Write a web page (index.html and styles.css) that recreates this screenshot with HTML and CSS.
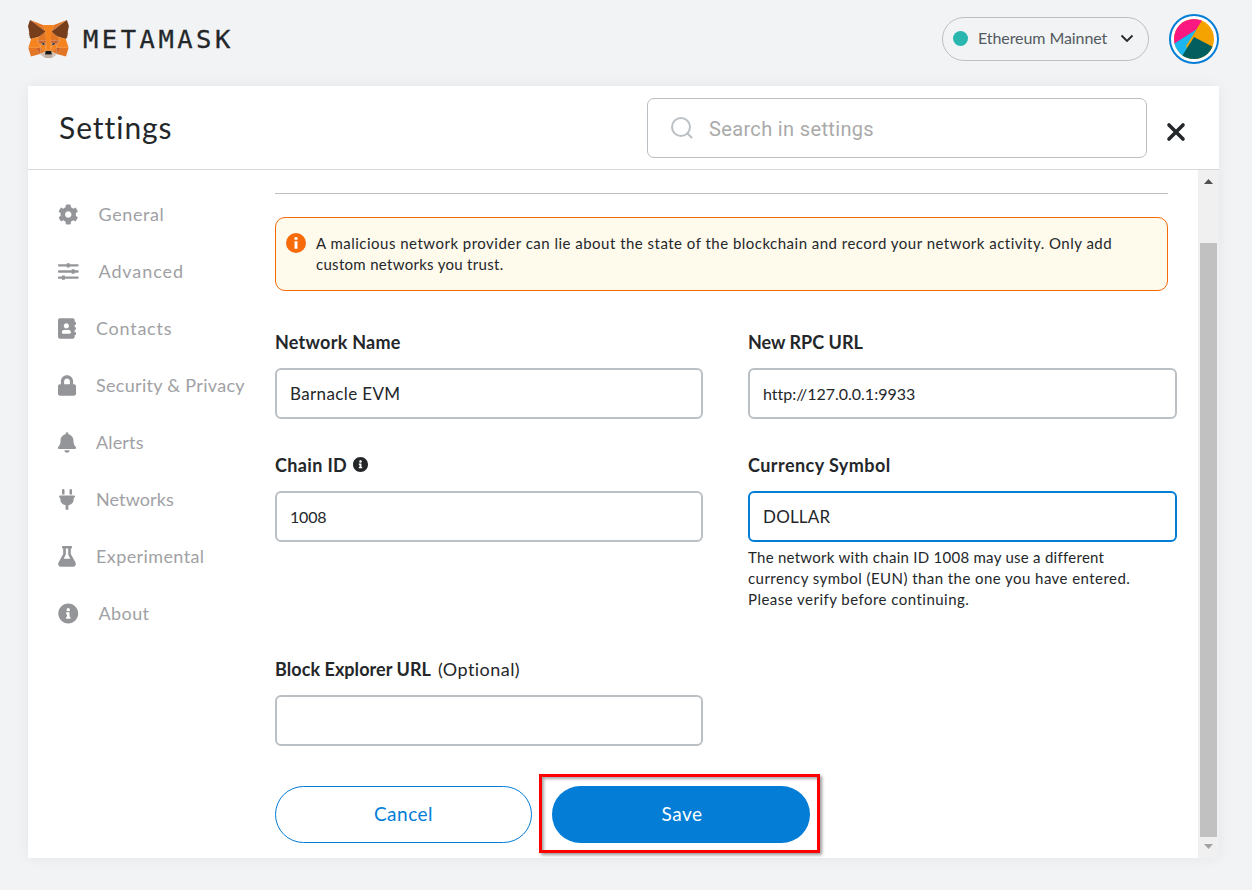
FILE: index.html
```html
<!DOCTYPE html>
<html lang="en">
<head>
<meta charset="utf-8">
<title>MetaMask</title>
<link rel="stylesheet" href="styles.css">
</head>
<body>
<header class="app-header">
  <div class="brand">
    <svg class="fox" viewBox="1 1 33.7 31.1" preserveAspectRatio="none">
      <path fill="#E17726" d="m32.9582 1-13.1341 9.7183 2.4424-5.7273z"/>
      <path fill="#E27625" d="m2.663 1 13.0171 9.809-2.3254-5.818zM28.2295 23.5335l-3.4947 5.3386 7.4829 2.0603 2.1436-7.2823zM1.2728 23.6501l2.1306 7.2823 7.4699-2.0603-3.4817-5.3386zM10.4706 14.5149l-2.0786 3.1358 7.405.3369-.2469-7.969zM25.1505 14.5149l-5.1575-4.587-.1688 8.0597 7.4049-.3369zM10.8733 28.8721l4.4819-2.1639-3.8583-3.0062zM20.2659 26.7082l4.4689 2.1639-.6105-5.1701z"/>
      <path fill="#D5BFB2" d="m24.7348 28.8721-4.469-2.1639.3638 2.9025-.039 1.231zM10.8732 28.8721l4.1572 1.9696-.026-1.231.3508-2.9025z"/>
      <path fill="#233447" d="m15.1084 21.7842-3.7155-1.0884 2.6243-1.2051zM20.5126 21.7842l1.0913-2.2935 2.6372 1.2051z"/>
      <path fill="#CC6228" d="m10.8733 28.8721.6495-5.3386-4.1312.1167zM24.0982 23.5335l.6366 5.3386 3.4946-5.2219zM27.2291 17.6507l-7.405.3369.6885 3.7966 1.0913-2.2935 2.6372 1.2051zM11.3929 20.6958l2.6242-1.2051 1.0913 2.2935.6885-3.7966-7.405-.3369z"/>
      <path fill="#E27525" d="m8.392 17.6507 3.1049 6.0513-.1039-3.0062zM24.2412 20.6958l-.1169 3.0062 3.1049-6.0513zM15.797 17.9876l-.6886 3.7967.8704 4.4833.1949-5.9087zM19.8242 17.9876l-.3638 2.3584.1819 5.9216.8704-4.4833z"/>
      <path fill="#F5841F" d="m20.5127 21.7842-.8704 4.4834.6236.4406 3.8584-3.0062.1169-3.0062zM11.3929 20.6958l.104 3.0062 3.8583 3.0062.6236-.4406-.8704-4.4834z"/>
      <path fill="#C0AC9D" d="m20.5906 30.8417.039-1.231-.3378-.2851h-4.9626l-.3248.2851.026 1.231-4.1572-1.9696 1.4551 1.1921 2.9489 2.0344h5.0536l2.962-2.0344 1.442-1.1921z"/>
      <path fill="#161616" d="m20.2659 26.7082-.6236-.4406h-3.6635l-.6236.4406-.3508 2.9025.3248-.2851h4.9626l.3378.2851z"/>
      <path fill="#763E1A" d="m33.5168 11.3532 1.1043-5.3645-1.6629-4.9887-12.6923 9.3944 4.8846 4.1205 6.8983 2.0085 1.52-1.7752-.6626-.4795 1.0523-.9588-.8054-.622 1.0523-.8034zM1 5.9887l1.1043 5.3645-.7145.5313 1.0653.8034-.8054.622 1.0523.9588-.6625.4795 1.52 1.7752 6.8984-2.0085 4.8846-4.1205L2.663 1z"/>
      <path fill="#F5841F" d="m32.0489 16.5234-6.8983-2.0085 2.0786 3.1358-3.1049 6.0513 4.1052-.0519h6.1318zM10.4705 14.5149l-6.8983 2.0085-2.2994 7.1267h6.1188l4.1052.0519-3.105-6.0513zM19.8241 17.9876l.4417-7.5932 2.0007-5.4034h-8.9119l2.0006 5.4034.4417 7.5932.1689 2.3842.013 5.8958h3.6635l.013-5.8958z"/>
    </svg>
    <span class="wordmark">METAMASK</span>
  </div>
  <div class="account">
    <div class="network">
      <i class="network-dot"></i>
      <span class="network-name">Ethereum Mainnet</span>
      <svg class="chevron" viewBox="0 0 14 9"><path d="M1.500 1.500 7 7l5.500-5.500"/></svg>
    </div>
    <svg class="avatar" viewBox="0 0 50 50">
      <defs><clipPath id="disc"><circle cx="25" cy="25" r="20"/></clipPath></defs>
      <circle cx="25" cy="25" r="24" fill="#fff" stroke="#037dd6" stroke-width="2"/>
      <g clip-path="url(#disc)">
        <path fill="#f5a300" d="M0 0h50v50H0z"/>
        <path fill="#fb1880" d="M0 0h37L27 16 5 31H0z"/>
        <path fill="#1bb6f0" d="M0 33 28 15 17 36v14H0z"/>
        <path fill="#f5a300" d="m17 32 11-17 2 5-6 5-6 9z"/>
        <path fill="#035e60" d="m25 23 25 13v14H8z"/>
      </g>
    </svg>
  </div>
</header>

<main class="card">
  <div class="card-header">
    <h1 class="title">Settings</h1>
    <div class="search">
      <svg class="search-icon" viewBox="0 0 24 24"><circle cx="11" cy="11" r="9"/><path d="m17.500 17.500 4 4"/></svg>
      <span class="search-text">Search in settings</span>
    </div>
    <svg class="close" viewBox="0 0 20 20"><path d="m3 3 14 14M17 3 3 17"/></svg>
  </div>

  <div class="card-body">
    <nav class="nav">
      <a class="nav-item wide"><svg viewBox="0 0 512 512"><path d="M487.400 315.700l-42.600-24.600c4.300-23.200 4.300-47 0-70.200l42.600-24.600c4.900-2.800 7.100-8.600 5.500-14-11.100-35.600-30-67.800-54.700-94.600-3.800-4.100-10-5.100-14.800-2.300L380.800 110c-17.900-15.400-38.500-27.300-60.800-35.100V25.800c0-5.600-3.900-10.500-9.400-11.700-36.700-8.200-74.300-7.800-109.200 0-5.500 1.200-9.400 6.100-9.400 11.700V75c-22.200 7.900-42.800 19.800-60.800 35.100L88.700 85.500c-4.900-2.800-11-1.900-14.800 2.300-24.700 26.700-43.600 58.900-54.700 94.600-1.700 5.400.6 11.200 5.500 14L67.300 221c-4.300 23.200-4.300 47 0 70.200l-42.600 24.600c-4.900 2.800-7.100 8.600-5.500 14 11.100 35.600 30 67.800 54.700 94.600 3.800 4.100 10 5.100 14.800 2.300l42.600-24.600c17.900 15.400 38.500 27.300 60.800 35.100v49.200c0 5.600 3.900 10.500 9.400 11.700 36.700 8.200 74.300 7.800 109.200 0 5.500-1.200 9.400-6.100 9.400-11.700v-49.200c22.200-7.900 42.800-19.800 60.800-35.100l42.600 24.600c4.900 2.800 11 1.900 14.800-2.300 24.700-26.700 43.600-58.900 54.700-94.600 1.500-5.500-.7-11.300-5.600-14.100zM256 336c-44.100 0-80-35.900-80-80s35.900-80 80-80 80 35.900 80 80-35.900 80-80 80z"/></svg><span class="t-general">General</span></a>
      <a class="nav-item wide"><svg viewBox="0 0 21 21"><path d="M1 3h8V2h3v1h8a1 1 0 0 1 0 2.400h-8v1.100H9V5.400H1A1 1 0 0 1 1 3zM1 9.300h13V8.300h3v1h3a1 1 0 0 1 0 2.400h-3v1h-3v-1H1a1 1 0 0 1 0-2.400zM1 15.600h3v-1.100h3v1.100h13a1 1 0 0 1 0 2.400H7v1H4v-1H1a1 1 0 0 1 0-2.400z"/></svg><span class="t-advanced">Advanced</span></a>
      <a class="nav-item"><svg viewBox="0 0 448 512"><path d="M436 160c6.600 0 12-5.400 12-12v-40c0-6.600-5.400-12-12-12h-20V48c0-26.500-21.500-48-48-48H48C21.500 0 0 21.500 0 48v416c0 26.500 21.500 48 48 48h320c26.500 0 48-21.500 48-48v-48h20c6.600 0 12-5.400 12-12v-40c0-6.600-5.400-12-12-12h-20v-64h20c6.600 0 12-5.400 12-12v-40c0-6.600-5.400-12-12-12h-20v-64h20zm-228-32c35.300 0 64 28.700 64 64s-28.700 64-64 64-64-28.700-64-64 28.700-64 64-64zm112 236.800c0 10.600-10 19.200-22.400 19.200H118.400C106 384 96 375.400 96 364.800v-19.200c0-31.800 30.100-57.600 67.200-57.600h5c12.300 5.100 25.700 8 39.800 8s27.600-2.900 39.800-8h5c37.100 0 67.200 25.800 67.200 57.600v19.200z"/></svg><span class="t-contacts">Contacts</span></a>
      <a class="nav-item"><svg viewBox="0 0 448 512"><path d="M400 224h-24v-72C376 68.200 307.800 0 224 0S72 68.200 72 152v72H48c-26.500 0-48 21.500-48 48v192c0 26.500 21.500 48 48 48h352c26.500 0 48-21.500 48-48V272c0-26.500-21.500-48-48-48zm-104 0H152v-72c0-39.700 32.300-72 72-72s72 32.300 72 72v72z"/></svg><span class="t-security">Security &amp; Privacy</span></a>
      <a class="nav-item"><svg viewBox="0 0 448 512"><path d="M224 512c35.320 0 63.970-28.650 63.970-64H160.030c0 35.350 28.650 64 63.970 64zm215.390-149.710c-19.320-20.760-55.470-51.990-55.470-154.290 0-77.700-54.480-139.900-127.940-155.160V32c0-17.670-14.320-32-31.980-32s-31.980 14.330-31.980 32v20.840C118.560 68.100 64.080 130.300 64.080 208c0 102.300-36.150 133.530-55.470 154.290-6 6.450-8.660 14.160-8.610 21.710.11 16.400 12.980 32 32.100 32h383.800c19.120 0 32-15.600 32.100-32 .05-7.550-2.610-15.270-8.610-21.710z"/></svg><span class="t-alerts">Alerts</span></a>
      <a class="nav-item"><svg viewBox="0 0 18 21"><path d="M4 1.200a1.200 1.200 0 0 1 2.500 0V5.500H4zM11.500 1.200a1.200 1.200 0 0 1 2.500 0V5.500h-2.500zM1.700 6.600h14.600a.6.6 0 0 1 .6.600v.9a.6.600 0 0 1-.6.600h-.6v1.500a6.500 6.500 0 0 1-5.300 6v4.500H7.600v-4.500a6.500 6.500 0 0 1-5.300-6V8.700h-.6a.6.600 0 0 1-.6-.6v-.9a.6.600 0 0 1 .6-.6z"/></svg><span class="t-networks">Networks</span></a>
      <a class="nav-item"><svg viewBox="0 0 18 21"><path fill-rule="evenodd" d="M4.800 0h8.400c.5 0 .8.300.8.800v1c0 .5-.3.800-.8.800h-.4v5.300l4.700 8.700c1 2-.3 4.100-2.400 4.100H2.900C.8 20.700-.5 18.600.5 16.600l4.700-8.700V2.600h-.4c-.5 0-.8-.3-.8-.8v-1c0-.5.3-.8.800-.8zM7.800 2.600v6L5.700 12.800h6.600L10.200 8.600v-6z"/></svg><span class="t-experimental">Experimental</span></a>
      <a class="nav-item wide"><svg viewBox="0 0 512 512"><path d="M256 8C119.043 8 8 119.083 8 256c0 136.997 111.043 248 248 248s248-111.003 248-248C504 119.083 392.957 8 256 8zm0 110c23.196 0 42 18.804 42 42s-18.804 42-42 42-42-18.804-42-42 18.804-42 42-42zm56 254c0 6.627-5.373 12-12 12h-88c-6.627 0-12-5.373-12-12v-24c0-6.627 5.373-12 12-12h12v-64h-12c-6.627 0-12-5.373-12-12v-24c0-6.627 5.373-12 12-12h64c6.627 0 12 5.373 12 12v100h12c6.627 0 12 5.373 12 12v24z"/></svg><span class="t-about">About</span></a>
    </nav>

    <section class="content">
      <div class="divider"></div>
      <div class="alert">
        <svg class="alert-icon" viewBox="0 0 20 20"><circle cx="10" cy="10" r="10" fill="#f66a0a"/><path fill="#fff" d="M8.500 4.200h3v2.600h-3zM8.500 8.200h3v7.600h-3z"/></svg>
        <p class="alert-text"><span class="t-alert1">A malicious network provider can lie about the state of the blockchain and record your network activity. Only add</span><br><span class="t-alert2">custom networks you trust.</span></p>
      </div>
      <div class="form">
        <div class="field">
          <div class="label t-name">Network Name</div>
          <div class="input t-barnacle">Barnacle EVM</div>
        </div>
        <div class="field">
          <div class="label t-rpc">New RPC URL</div>
          <div class="input t-url">http://127.0.0.1:9933</div>
        </div>
        <div class="field">
          <div class="label"><span class="t-chain">Chain ID</span><svg class="info" viewBox="8 8 496 496"><path d="M256 8C119.043 8 8 119.083 8 256c0 136.997 111.043 248 248 248s248-111.003 248-248C504 119.083 392.957 8 256 8zm0 110c23.196 0 42 18.804 42 42s-18.804 42-42 42-42-18.804-42-42 18.804-42 42-42zm56 254c0 6.627-5.373 12-12 12h-88c-6.627 0-12-5.373-12-12v-24c0-6.627 5.373-12 12-12h12v-64h-12c-6.627 0-12-5.373-12-12v-24c0-6.627 5.373-12 12-12h64c6.627 0 12 5.373 12 12v100h12c6.627 0 12 5.373 12 12v24z"/></svg></div>
          <div class="input t-1008">1008</div>
        </div>
        <div class="field">
          <div class="label t-currency">Currency Symbol</div>
          <div class="input focused t-dollar">DOLLAR</div>
          <p class="hint"><span class="t-hint1">The network with chain ID 1008 may use a different</span><br><span class="t-hint2">currency symbol (EUN) than the one you have entered.</span><br><span class="t-hint3">Please verify before continuing.</span></p>
        </div>
        <div class="field">
          <div class="label"><span class="t-block">Block Explorer URL</span><span class="optional">(Optional)</span></div>
          <div class="input"></div>
        </div>
      </div>
      <div class="actions">
        <div class="btn cancel">Cancel</div>
        <div class="highlight"><div class="btn save">Save</div></div>
      </div>
    </section>

    <div class="scrollbar">
      <svg class="arrow up" viewBox="0 0 9 5"><path d="M4.500 0 9 5H0z"/></svg>
      <div class="thumb"></div>
      <svg class="arrow down" viewBox="0 0 9 5"><path d="M0 0h9L4.500 5z"/></svg>
    </div>
  </div>
</main>
</body>
</html>
```
FILE: styles.css
```css
* { box-sizing: border-box; }

body {
  margin: 0;
  width: 1252px;
  height: 890px;
  overflow: hidden;
  background: #f2f3f4;
  color: #24272a;
  font-family: Lato, "Open Sans", sans-serif;
  font-size: 16px;
  font-variant-ligatures: none;
}

h1, p { margin: 0; font-weight: 400; }
svg { display: block; flex: none; }
span, .btn { white-space: nowrap; }

.app-header {
  display: flex;
  justify-content: space-between;
  align-items: flex-start;
  height: 86px;
  padding: 14px 33px 0 28px;
}

.brand { display: flex; align-items: center; gap: 14px; padding-top: 5px; }
.fox { width: 41px; height: 38px; }
.wordmark {
  font-family: "DejaVu Sans Mono", monospace;
  font-size: 25.500px;
  line-height: 40px;
  letter-spacing: 3.500px;
  -webkit-text-stroke: 0.300px #24272a;
}

.account { display: flex; align-items: center; gap: 20px; }
.network {
  display: flex;
  align-items: center;
  width: 207px;
  height: 44px;
  margin-bottom: 1px;
  padding: 0 14px 0 10px;
  border: 1px solid #bbc0c5;
  border-radius: 22px;
  color: #535a61;
}
.network-dot { width: 15px; height: 15px; border-radius: 50%; background: #29b6af; }
.network-name { width: 129px; margin: 0 13px 2px 10px; letter-spacing: -0.080px; }
.chevron { width: 14px; height: 9px; fill: none; stroke: #24272a; stroke-width: 1.800; }
.avatar { width: 50px; height: 50px; }

.card {
  width: 1191px;
  height: 772px;
  margin-left: 28px;
  background: #fff;
  box-shadow: 0 0 14px rgba(0, 0, 0, 0.06);
}

.card-header {
  display: flex;
  align-items: center;
  height: 84px;
  padding: 0 33px 0 31px;
  border-bottom: 1px solid #d6d9dc;
}
.title { width: 588px; margin-bottom: 2px; font-size: 30px; line-height: 40px; letter-spacing: 0.950px; }
.search {
  display: flex;
  align-items: center;
  width: 500px;
  height: 60px;
  padding-left: 22px;
  border: 1px solid #bbc0c5;
  border-radius: 7px;
}
.search-icon { width: 24px; height: 24px; margin-top: 1px; fill: none; stroke: #bbc0c5; stroke-width: 2; stroke-linecap: round; }
.search-text { margin: 2px 0 0 15px; font-family: Roboto, sans-serif; font-size: 20px; letter-spacing: 0.350px; color: #aaa; }
.close { width: 20px; height: 20px; margin: 8px 0 0 19px; fill: none; stroke: #24272a; stroke-width: 3.600; stroke-linecap: round; }

.card-body { display: flex; height: 688px; }

.nav { width: 247px; padding: 16px 0 0 30px; }
.nav-item {
  display: flex;
  align-items: center;
  gap: 20px;
  height: 57px;
  font-size: 18px;
  color: #9fa1a4;
}
.nav-item span { margin-bottom: 2px; }
.nav-item svg { width: 18px; height: 21px; fill: #939598; }
.nav-item.wide svg { width: 20.500px; height: 21px; }

.t-general { letter-spacing: 0.600px; }
.t-advanced { letter-spacing: 0.900px; }
.t-contacts { letter-spacing: 0.750px; }
.t-security { letter-spacing: 0.300px; }
.t-alerts { letter-spacing: 0.150px; }
.t-networks { letter-spacing: 0.100px; }
.t-experimental { letter-spacing: 0.400px; }
.t-about { letter-spacing: 0.400px; }

.content { width: 923px; padding-top: 23px; }
.divider { width: 893px; height: 1px; background: #bbc0c5; }
.alert {
  display: flex;
  gap: 10px;
  width: 893px;
  height: 74px;
  margin-top: 23px;
  padding: 15px 10px;
  border: 1px solid #f66a0a;
  border-radius: 10px;
  background: #fefaec;
}
.alert-icon { width: 20px; height: 20px; }
.alert-text { font-size: 15px; line-height: 21px; }
.t-alert1 { letter-spacing: 0.485px; }
.t-alert2 { letter-spacing: 0.300px; }

.form {
  display: grid;
  grid-template-columns: 428px 429px;
  grid-template-rows: 123px 204px 76px;
  column-gap: 45px;
  padding-top: 40px;
}
.label { display: flex; align-items: center; height: 22px; font-size: 18px; font-weight: 700; }
.input {
  display: flex;
  align-items: center;
  height: 51px;
  margin-top: 15px;
  padding: 0 13px 1px;
  border: 2px solid #bbc0c5;
  border-radius: 6px;
  font-size: 17px;
}
.input.focused { border-color: #037dd6; }
.info { width: 15px; height: 15px; margin: 0 0 1px 6px; fill: #24272a; }
.optional { margin-left: 7px; font-weight: 400; letter-spacing: 0.450px; }
.hint { padding-top: 5px; font-size: 15px; line-height: 21px; }

.t-name { letter-spacing: 0.250px; }
.t-chain { letter-spacing: 0.350px; }
.t-currency { letter-spacing: 0.450px; }
.t-block { letter-spacing: 0.050px; }
.t-barnacle { letter-spacing: 0.370px; }
.t-url { font-size: 16px; }
.t-1008 { font-size: 16px; letter-spacing: -0.200px; }
.t-dollar { letter-spacing: 0.200px; }
.t-hint1 { letter-spacing: 0.270px; }
.t-hint2 { letter-spacing: 0.440px; }
.t-hint3 { letter-spacing: 0.470px; }

.actions { display: flex; gap: 7px; margin-top: 40px; }
.btn {
  display: flex;
  align-items: center;
  justify-content: center;
  height: 57px;
  padding-bottom: 2px;
  border-radius: 29px;
  font-size: 19px;
  letter-spacing: 0.500px;
}
.cancel { width: 257px; margin-top: 12px; border: 1px solid #037dd6; color: #037dd6; }
.highlight {
  width: 281px;
  height: 79px;
  padding: 9px 7px 0 10px;
  border: 3px solid #f00;
  box-shadow: 2px 2px 3px rgba(0, 0, 0, 0.400), inset 2px 2px 3px rgba(0, 0, 0, 0.350);
}
.save { padding-left: 2px; background: #037dd6; color: #fff; }

.scrollbar {
  display: flex;
  flex-direction: column;
  align-items: center;
  width: 21px;
  background: #f0f0f0;
}
.thumb { width: 17px; height: 594px; margin-top: 59px; background: #c1c1c1; }
.arrow { width: 9px; height: 5px; }
.up { margin-top: 9px; fill: #505050; }
.down { margin-top: 7px; fill: #a3a3a3; }
```
